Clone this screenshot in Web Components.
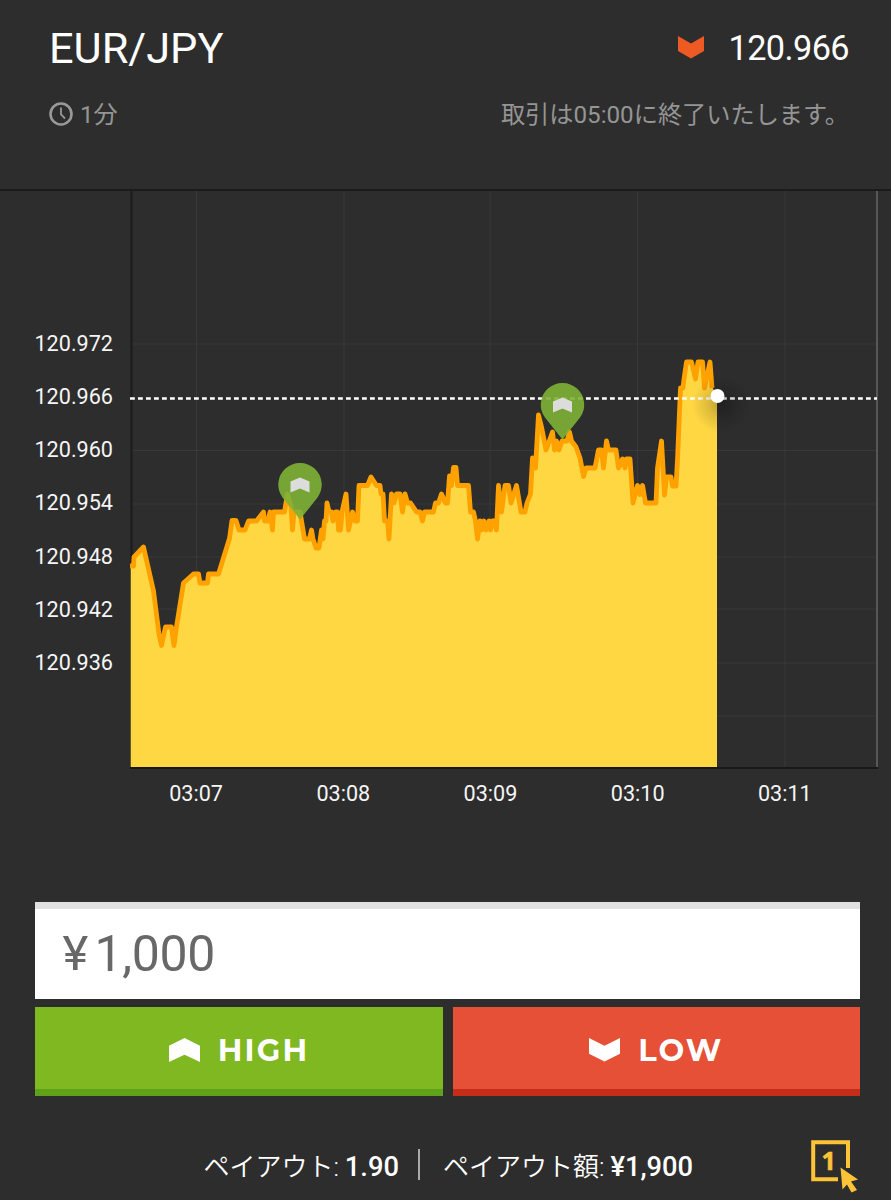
<!DOCTYPE html>
<html lang="ja">
<head>
<meta charset="utf-8">
<title>EUR/JPY</title>
<style>
html, body {
    margin: 0;
    background: #2d2d2d;
}
body {
    width: 891px;
    height: 1200px;
    overflow: hidden;
    color: #fff;
    font-family: Roboto, "Noto Sans CJK JP", sans-serif;
}
</style>
</head>
<body>
<trade-app></trade-app>
<script>
class DirectionIcon extends HTMLElement {
    constructor() {
        super();
        this.attachShadow({ mode: 'open' });
        const shape = this.getAttribute('type') === 'up'
            ? 'M0 8 L15.5 0 L31 8 V24.5 L15.5 17 L0 24.5 Z'
            : 'M0 0 L15.5 8 L31 0 V16 L15.5 24 L0 16 Z';
        this.shadowRoot.innerHTML = `
        <style>
        :host { display: block; width: 31px; height: 24px; }
        svg { display: block; width: 100%; height: 100%; }
        </style>
        <svg viewBox="0 0 31 24.5" preserveAspectRatio="none"><path d="${shape}" fill="currentColor"/></svg>
        `;
    }
}
customElements.define('direction-icon', DirectionIcon);

class TradeHeader extends HTMLElement {
    constructor() {
        super();
        this.attachShadow({ mode: 'open' });
        this.shadowRoot.innerHTML = `
        <style>
        :host {
            display: block;
            box-sizing: border-box;
            height: 191px;
            padding: 23px 42px 0 49px;
            border-bottom: 2px solid #1b1b1b;
        }
        .row { display: flex; align-items: center; justify-content: space-between; }
        .main { height: 52px; }
        .pair { margin-top: -2px; font-size: 43.3px; }
        .price { display: flex; align-items: center; margin-top: -3px; font-size: 34.3px; letter-spacing: -0.6px; }
        direction-icon { width: 26px; height: 23px; margin-right: 25px; color: #ee5a24; }
        .sub { height: 30px; margin-top: 25px; color: #959595; font-size: 24.2px; font-weight: 400; line-height: 30px; }
        .time { display: flex; align-items: center; }
        .time svg { margin-right: 7px; margin-top: -3px; }
        </style>
        <div class="row main">
            <span class="pair"><slot name="pair"></slot></span>
            <span class="price"><direction-icon type="down"></direction-icon><slot name="price"></slot></span>
        </div>
        <div class="row sub">
            <span class="time">
                <svg width="24" height="24" viewBox="0 0 24 24" fill="none" stroke="#999">
                    <circle cx="12" cy="12" r="10.5" stroke-width="2.6"/>
                    <path d="M12 5.5V12.5L16 16.5" stroke-width="1.8"/>
                </svg>
                <slot name="duration"></slot>
            </span>
            <slot name="notice"></slot>
        </div>
        `;
    }
}
customElements.define('trade-header', TradeHeader);

// [x, y] of each tick inside the chart area
const ticks = [
    [130,566],[133.5,566],[134,557],[143.5,547],[153.5,591],[159,634],[161.5,645.5],[165.5,627],[171.5,627],[174,645.5],
    [176.5,627],[183.5,583],[193.5,574],[198.5,574],[200,583],[207.5,583],[208.5,574],[218.5,574],[229.5,538.5],[232,520.5],
    [236,520.5],[239,530],[245,530],[248.5,521],[256.5,521],[263.5,512],[264.5,521],[268,521],[270,512],[272.5,530],
    [273.5,512],[284.5,512],[287.5,494],[291,507],[292.5,530],[294,512],[300,512],[304.5,539],[309.5,539],[311.5,530],
    [313,539],[316,548],[319,548],[321.5,530],[323,539],[324.5,521],[326,521],[327,503],[329,512],[331.5,512],[333,521],
    [335.5,512],[337.5,512],[338.5,530],[340.5,530],[342,512],[346,494],[348.5,530],[352.5,512],[355,521],[357.5,521],
    [359,485.5],[367.5,485.5],[371,477],[376.5,485.5],[380,485.5],[381,494],[383,494],[384.5,521],[387.5,521],[389,539],
    [391.5,494],[394,503],[396.5,494],[400,494],[402.5,512],[405,494],[407.5,503],[410.5,503],[416.5,512],[420,512],
    [422.5,521],[424.5,512],[433.5,512],[435.5,503],[438.5,503],[441.5,494],[445.5,503],[447.5,503],[449.5,476],[451.5,485.5],
    [453.5,467.5],[456,467.5],[457.5,485.5],[468.5,485.5],[470.5,512],[473.5,512],[475.5,521],[477.5,539],[480,521],[481.5,530],
    [484,521],[486,530],[489,521],[490.5,530],[492,521],[494.5,521],[496.5,530],[498.5,485.5],[501.5,512],[505,485.5],
    [508.5,485.5],[511,503],[516.5,485.5],[521,512],[525,512],[527,503],[530.5,494],[532.5,458],[535.5,468],[538.5,415],
    [541.5,427],[546,450],[552.5,432],[554.5,450],[556.5,441],[559,450],[562,441],[567,441],[569.5,432],[571.5,441],
    [576,447],[580,458],[583.5,476.5],[586,468],[595,468],[598.5,450],[601.5,450],[603.5,468],[606.5,441],[608.5,450],
    [616,450],[618.5,468],[622.5,459],[625,468],[626.5,459],[630,459],[633,503],[637.5,485.5],[640,494.5],[642.5,485.5],
    [645.5,503],[656,503],[657.5,468],[661.5,441],[664.5,495],[666.5,477],[671,477],[672.5,486],[676,486],[677.5,460],
    [680.5,388],[683,388],[684,379],[686.5,362],[691.5,362],[695.5,379],[698,362],[702.5,362],[704.5,388],[710,362],[712,388]
];

class PriceChart extends HTMLElement {
    constructor() {
        super();
        this.attachShadow({ mode: 'open' });
        const line = ticks.map(p => p.join(' ')).join(' L');
        const prices = ['120.972', '120.966', '120.960', '120.954', '120.948', '120.942', '120.936'];
        const times = ['03:07', '03:08', '03:09', '03:10', '03:11'];
        const vertical = [196.5, 344, 490, 637.5, 785];
        const horizontal = [344, 450.5, 504, 557, 609, 663, 716];
        this.shadowRoot.innerHTML = `
        <style>
        :host {
            display: grid;
            grid-template-columns: 130px 748px;
            grid-template-rows: 579px 46px;
            height: 629px;
            font-size: 21.6px;
            color: #f5f5f5;
        }
        .prices {
            display: grid;
            grid-auto-rows: 53.15px;
            align-items: center;
            justify-items: end;
            align-content: start;
            padding: 126px 17px 0 0;
        }
        .plot { display: block; }
        .times {
            grid-column: 1 / 3;
            display: grid;
            grid-template-columns: repeat(5, 147.2px);
            justify-items: center;
            align-items: center;
            padding-left: 122.5px;
        }
        </style>
        <div class="prices">${prices.map(p => `<span>${p}</span>`).join('')}</div>
        <svg class="plot" width="748" height="579" viewBox="130 191 748 579">
            <defs>
                <radialGradient id="shade">
                    <stop offset="0" stop-color="#000" stop-opacity=".28"/>
                    <stop offset=".5" stop-color="#000" stop-opacity=".12"/>
                    <stop offset="1" stop-color="#000" stop-opacity="0"/>
                </radialGradient>
            </defs>
            <g stroke="#393939">
                ${vertical.map(x => `<path d="M${x} 191V767"/>`).join('')}
                ${horizontal.map(y => `<path d="M132 ${y}H877"/>`).join('')}
            </g>
            <path d="M131.5 191V768" stroke="#1b1b1b" stroke-width="2"/>
            <path d="M${line} L716.3 396 V767 H130 Z" transform="translate(.7 0)" fill="#ffd743"/>
            <path d="M${line}" fill="none" stroke="#ffa200" stroke-width="4.8" stroke-linejoin="round"/>
            <path d="M130 768H878" stroke="#181818" stroke-width="2"/>
            <path d="M877 191V767" stroke="#666" stroke-width="1.5"/>
            <path d="M130 398.5H877" stroke="#fff" stroke-width="2.4" stroke-dasharray="4.8 3.2"/>
            <ellipse cx="722" cy="404" rx="30" ry="29" fill="url(#shade)"/>
            <circle cx="717.5" cy="396" r="7" fill="#fff"/>
            ${this.marker(300, 463.5)}
            ${this.marker(562.5, 383.5)}
        </svg>
        <div class="times">${times.map(t => `<span>${t}</span>`).join('')}</div>
        `;
    }

    marker(x, y) {
        return `<g transform="translate(${x} ${y})">
            <path d="M0 56 L-17.5 34 A21.7 21.7 0 1 1 17.5 34 Z" fill="#7fb236" fill-opacity=".9"/>
            <path d="M-9.5 18 L0 14 L9.5 18 V29 L0 25 L-9.5 29 Z" fill="#dcdcdc"/>
        </g>`;
    }
}
customElements.define('price-chart', PriceChart);

class AmountField extends HTMLElement {
    constructor() {
        super();
        this.attachShadow({ mode: 'open' });
        this.shadowRoot.innerHTML = `
        <style>
        :host {
            display: flex;
            align-items: center;
            box-sizing: border-box;
            height: 97px;
            padding: 0 27px 1px 27px;
            border-top: 7px solid #e0e0e0;
            background: #fff;
            color: #686868;
            font-size: 50px;
            letter-spacing: -0.3px;
        }
        .yen { width: 32px; font-size: 49px; }
        </style>
        <span class="yen">¥</span><slot></slot>
        `;
    }
}
customElements.define('amount-field', AmountField);

class TradeButton extends HTMLElement {
    constructor() {
        super();
        this.attachShadow({ mode: 'open' });
        this.shadowRoot.innerHTML = `
        <style>
        :host {
            display: flex;
            align-items: center;
            justify-content: center;
            gap: 18px;
            box-sizing: border-box;
            height: 89px;
            padding-top: 4px;
            color: #fff;
            background: #7fb820;
            border-bottom: 7px solid #60a11a;
            font: 700 30.5px Montserrat, Inter, sans-serif;
            letter-spacing: 2.2px;
        }
        :host([type="down"]) {
            background: #e55037;
            border-color: #c42d17;
        }
        </style>
        <direction-icon type="${this.getAttribute('type')}"></direction-icon>
        <slot></slot>
        `;
    }
}
customElements.define('trade-button', TradeButton);

class OneClick extends HTMLElement {
    constructor() {
        super();
        this.attachShadow({ mode: 'open' });
        this.shadowRoot.innerHTML = `
        <style>
        :host { display: block; width: 48px; height: 54px; }
        svg { display: block; }
        text { font: 700 25px "Open Sans", sans-serif; }
        </style>
        <svg width="48" height="54" viewBox="0 0 48 54" fill="#fdc338">
            <path d="M27 39.2H2.2V2.2H37V28" fill="none" stroke="#fdc338" stroke-width="4"/>
            <text x="10.5" y="29.5" stroke="#fdc338" stroke-width=".6">1</text>
            <path d="M29.5 27.5 L47 39.5 L40 41.5 L46 50 L40.5 52.5 L36 44.5 L31.5 49.5 Z"/>
        </svg>
        `;
    }
}
customElements.define('one-click', OneClick);

class PayoutBar extends HTMLElement {
    constructor() {
        super();
        this.attachShadow({ mode: 'open' });
        this.shadowRoot.innerHTML = `
        <style>
        :host {
            display: grid;
            grid-template-columns: 776px 48px;
            align-items: center;
            height: 60px;
            margin-top: 41px;
        }
        .info { display: flex; align-items: center; margin-top: -5px; padding-left: 168px; font-size: 27.3px; white-space: pre; }
        .item { display: flex; align-items: center; }
        .sep { width: 2px; height: 31px; margin: 0 23px 0 19px; background: #aaa; }
        </style>
        <div class="info">
            <span class="item"><slot name="rate"></slot></span>
            <span class="sep"></span>
            <span class="item"><slot name="total"></slot></span>
        </div>
        <one-click></one-click>
        `;
    }
}
customElements.define('payout-bar', PayoutBar);

class TradeApp extends HTMLElement {
    constructor() {
        super();
        this.attachShadow({ mode: 'open' });
        this.shadowRoot.innerHTML = `
        <style>
        :host { display: block; }
        .form { padding: 82px 31px 0 35.4px; }
        .buttons { display: grid; grid-template-columns: 1fr 1fr; gap: 10px; margin-top: 8px; }
        .label { font-size: 26px; font-weight: 350; }
        b { font-weight: 500; margin-left: 6px; }
        </style>
        <trade-header>
            <span slot="pair">EUR/JPY</span>
            <span slot="price">120.966</span>
            <span slot="duration">1分</span>
            <span slot="notice">取引は05:00に終了いたします。</span>
        </trade-header>
        <price-chart></price-chart>
        <div class="form">
            <amount-field>1,000</amount-field>
            <div class="buttons">
                <trade-button type="up">HIGH</trade-button>
                <trade-button type="down">LOW</trade-button>
            </div>
            <payout-bar>
                <span slot="rate"><span class="label">ペイアウト:</span><b>1.90</b></span>
                <span slot="total"><span class="label">ペイアウト額:</span><b>¥1,900</b></span>
            </payout-bar>
        </div>
        `;
    }
}
customElements.define('trade-app', TradeApp);
</script>
</body>
</html>
